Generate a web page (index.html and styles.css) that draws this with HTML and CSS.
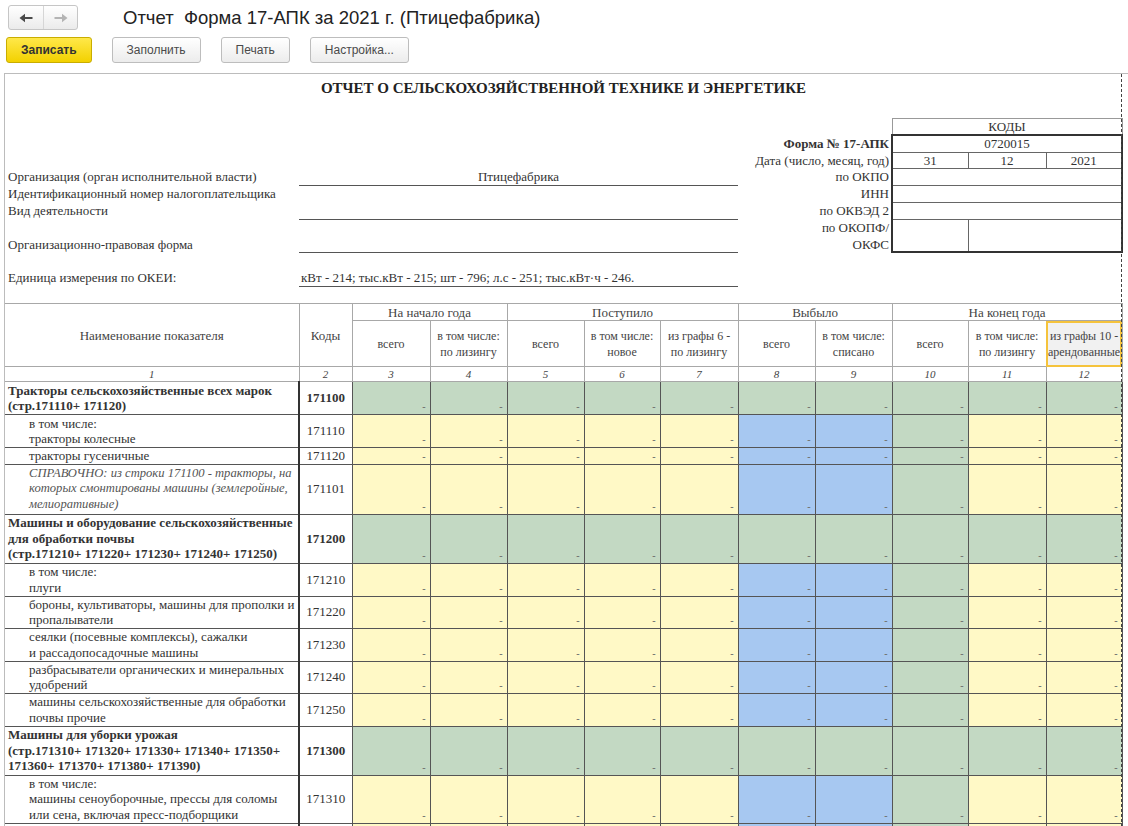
FILE: index.html
```html
<!DOCTYPE html>
<html lang="ru">
<head>
<meta charset="utf-8">
<title>Отчет Форма 17-АПК за 2021 г.</title>
<link rel="stylesheet" href="styles.css">
</head>
<body>
<div class="app">
  <header class="titlebar">
    <div class="nav">
      <button class="nav-btn" aria-label="Назад"><svg width="14" height="10" viewBox="0 0 14 10"><path d="M0.5 5 L6 0.8 L6 3.9 L13.5 3.9 L13.5 6.1 L6 6.1 L6 9.2 Z" fill="#4a4a4a"/></svg></button>
      <button class="nav-btn" aria-label="Вперед"><svg width="14" height="10" viewBox="0 0 14 10"><path d="M13.5 5 L8 0.8 L8 3.9 L0.5 3.9 L0.5 6.1 L8 6.1 L8 9.2 Z" fill="#b4b4b4"/></svg></button>
    </div>
    <h1 class="title">Отчет&nbsp; Форма 17-АПК за 2021 г. (Птицефабрика)</h1>
  </header>

  <div class="toolbar">
    <button class="btn btn-primary">Записать</button>
    <button class="btn">Заполнить</button>
    <button class="btn">Печать</button>
    <button class="btn">Настройка...</button>
  </div>

  <div class="sheet">
    <div class="doc">
      <div class="doc-title">ОТЧЕТ О СЕЛЬСКОХОЗЯЙСТВЕННОЙ ТЕХНИКЕ И ЭНЕРГЕТИКЕ</div>

      <table class="info">
        <colgroup>
          <col class="c1"><col class="c2"><col class="c3"><col class="c4"><col class="c5"><col class="c6"><col class="c7"><col class="c8"><col class="c9"><col class="c10"><col class="c11"><col class="c12">
        </colgroup>
        <tr class="ih16">
          <td colspan="9"></td>
          <td colspan="3" class="codes-head">КОДЫ</td>
        </tr>
        <tr class="ih17">
          <td colspan="7"></td>
          <td colspan="2" class="lbl b">Форма № 17-АПК</td>
          <td colspan="3" class="code-cell top">0720015</td>
        </tr>
        <tr class="ih16">
          <td colspan="7"></td>
          <td colspan="2" class="lbl">Дата (число, месяц, год)</td>
          <td class="code-cell l">31</td>
          <td class="code-cell mid">12</td>
          <td class="code-cell r">2021</td>
        </tr>
        <tr class="ih17">
          <td class="plain">Организация (орган исполнительной власти)</td>
          <td colspan="6" class="uline center">Птицефабрика</td>
          <td colspan="2" class="lbl">по ОКПО</td>
          <td colspan="3" class="code-cell"></td>
        </tr>
        <tr class="ih17">
          <td class="plain">Идентификационный номер налогоплательщика</td>
          <td colspan="6"></td>
          <td colspan="2" class="lbl">ИНН</td>
          <td colspan="3" class="code-cell"></td>
        </tr>
        <tr class="ih17">
          <td class="plain">Вид деятельности</td>
          <td colspan="6" class="uline"></td>
          <td colspan="2" class="lbl">по ОКВЭД 2</td>
          <td colspan="3" class="code-cell"></td>
        </tr>
        <tr class="ih17">
          <td></td>
          <td colspan="6"></td>
          <td colspan="2" class="lbl">по ОКОПФ/</td>
          <td rowspan="2" class="code-cell l bottom"></td>
          <td rowspan="2" colspan="2" class="code-cell r bottom"></td>
        </tr>
        <tr class="ih16">
          <td class="plain">Организационно-правовая форма</td>
          <td colspan="6" class="uline"></td>
          <td colspan="2" class="lbl">ОКФС</td>
        </tr>
        <tr class="ih17"><td colspan="12"></td></tr>
        <tr class="ih17">
          <td class="plain">Единица измерения по ОКЕИ:</td>
          <td colspan="6" class="uline">кВт - 214; тыс.кВт - 215; шт - 796; л.с - 251; тыс.кВт·ч - 246.</td>
          <td colspan="5"></td>
        </tr>
        <tr class="ih17"><td colspan="12"></td></tr>
      </table>

      <table class="grid">
        <colgroup>
          <col class="c1"><col class="c2"><col class="c3"><col class="c4"><col class="c5"><col class="c6"><col class="c7"><col class="c8"><col class="c9"><col class="c10"><col class="c11"><col class="c12">
        </colgroup>
        <thead>
          <tr class="hh1">
            <th rowspan="2" class="first big">Наименование показателя</th>
            <th rowspan="2" class="big">Коды</th>
            <th colspan="2" class="big">На начало года</th>
            <th colspan="3" class="big">Поступило</th>
            <th colspan="2" class="big">Выбыло</th>
            <th colspan="3" class="big">На конец года</th>
          </tr>
          <tr class="hh2">
            <th class="sub">всего</th>
            <th class="sub">в том числе:<br>по лизингу</th>
            <th class="sub">всего</th>
            <th class="sub">в том числе:<br>новое</th>
            <th class="sub">из графы 6 -<br>по лизингу</th>
            <th class="sub">всего</th>
            <th class="sub">в том числе:<br>списано</th>
            <th class="sub">всего</th>
            <th class="sub">в том числе:<br>по лизингу</th>
            <th class="sub selected">из графы 10 -<br>арендованные</th>
          </tr>
          <tr class="hh3">
            <th class="num first">1</th><th class="num">2</th><th class="num">3</th><th class="num">4</th><th class="num">5</th><th class="num">6</th><th class="num">7</th><th class="num">8</th><th class="num">9</th><th class="num">10</th><th class="num">11</th><th class="num">12</th>
          </tr>
        </thead>
        <tbody>
          <tr class="rh33">
            <td class="name b">Тракторы сельскохозяйственные всех марок<br>(стр.171110+ 171120)</td>
            <td class="code b">171100</td>
            <td class="v g">-</td><td class="v g">-</td><td class="v g">-</td><td class="v g">-</td><td class="v g">-</td><td class="v g">-</td><td class="v g">-</td><td class="v g">-</td><td class="v g">-</td><td class="v g">-</td>
          </tr>
          <tr class="rh33">
            <td class="name ind">в том числе:<br>тракторы колесные</td>
            <td class="code">171110</td>
            <td class="v y">-</td><td class="v y">-</td><td class="v y">-</td><td class="v y">-</td><td class="v y">-</td><td class="v bl">-</td><td class="v bl">-</td><td class="v g">-</td><td class="v y">-</td><td class="v y">-</td>
          </tr>
          <tr class="rh16">
            <td class="name ind">тракторы гусеничные</td>
            <td class="code">171120</td>
            <td class="v y">-</td><td class="v y">-</td><td class="v y">-</td><td class="v y">-</td><td class="v y">-</td><td class="v bl">-</td><td class="v bl">-</td><td class="v g">-</td><td class="v y">-</td><td class="v y">-</td>
          </tr>
          <tr class="rh50">
            <td class="name ind it">СПРАВОЧНО: из строки 171100 - тракторы, на<br>которых смонтированы машины (землеройные,<br>мелиоративные)</td>
            <td class="code">171101</td>
            <td class="v y">-</td><td class="v y">-</td><td class="v y">-</td><td class="v y">-</td><td class="v y">-</td><td class="v bl">-</td><td class="v bl">-</td><td class="v g">-</td><td class="v y">-</td><td class="v y">-</td>
          </tr>
          <tr class="rh49">
            <td class="name b">Машины и оборудование сельскохозяйственные<br>для обработки почвы<br>(стр.171210+ 171220+ 171230+ 171240+ 171250)</td>
            <td class="code b">171200</td>
            <td class="v g">-</td><td class="v g">-</td><td class="v g">-</td><td class="v g">-</td><td class="v g">-</td><td class="v g">-</td><td class="v g">-</td><td class="v g">-</td><td class="v g">-</td><td class="v g">-</td>
          </tr>
          <tr class="rh33">
            <td class="name ind">в том числе:<br>плуги</td>
            <td class="code">171210</td>
            <td class="v y">-</td><td class="v y">-</td><td class="v y">-</td><td class="v y">-</td><td class="v y">-</td><td class="v bl">-</td><td class="v bl">-</td><td class="v g">-</td><td class="v y">-</td><td class="v y">-</td>
          </tr>
          <tr class="rh32">
            <td class="name ind">бороны, культиваторы, машины для прополки и<br>пропалыватели</td>
            <td class="code">171220</td>
            <td class="v y">-</td><td class="v y">-</td><td class="v y">-</td><td class="v y">-</td><td class="v y">-</td><td class="v bl">-</td><td class="v bl">-</td><td class="v g">-</td><td class="v y">-</td><td class="v y">-</td>
          </tr>
          <tr class="rh33">
            <td class="name ind">сеялки (посевные комплексы), сажалки<br>и рассадопосадочные машины</td>
            <td class="code">171230</td>
            <td class="v y">-</td><td class="v y">-</td><td class="v y">-</td><td class="v y">-</td><td class="v y">-</td><td class="v bl">-</td><td class="v bl">-</td><td class="v g">-</td><td class="v y">-</td><td class="v y">-</td>
          </tr>
          <tr class="rh32">
            <td class="name ind">разбрасыватели органических и минеральных<br>удобрений</td>
            <td class="code">171240</td>
            <td class="v y">-</td><td class="v y">-</td><td class="v y">-</td><td class="v y">-</td><td class="v y">-</td><td class="v bl">-</td><td class="v bl">-</td><td class="v g">-</td><td class="v y">-</td><td class="v y">-</td>
          </tr>
          <tr class="rh33">
            <td class="name ind">машины сельскохозяйственные для обработки<br>почвы прочие</td>
            <td class="code">171250</td>
            <td class="v y">-</td><td class="v y">-</td><td class="v y">-</td><td class="v y">-</td><td class="v y">-</td><td class="v bl">-</td><td class="v bl">-</td><td class="v g">-</td><td class="v y">-</td><td class="v y">-</td>
          </tr>
          <tr class="rh49">
            <td class="name b">Машины для уборки урожая<br>(стр.171310+ 171320+ 171330+ 171340+ 171350+<br>171360+ 171370+ 171380+ 171390)</td>
            <td class="code b">171300</td>
            <td class="v g">-</td><td class="v g">-</td><td class="v g">-</td><td class="v g">-</td><td class="v g">-</td><td class="v g">-</td><td class="v g">-</td><td class="v g">-</td><td class="v g">-</td><td class="v g">-</td>
          </tr>
          <tr class="rh48">
            <td class="name ind">в том числе:<br>машины сеноуборочные, прессы для соломы<br>или сена, включая пресс-подборщики</td>
            <td class="code">171310</td>
            <td class="v y">-</td><td class="v y">-</td><td class="v y">-</td><td class="v y">-</td><td class="v y">-</td><td class="v bl">-</td><td class="v bl">-</td><td class="v g">-</td><td class="v y">-</td><td class="v y">-</td>
          </tr>
          <tr class="rh33">
            <td class="name"></td>
            <td class="code"></td>
            <td class="y"></td><td class="y"></td><td class="y"></td><td class="y"></td><td class="y"></td><td class="bl"></td><td class="bl"></td><td class="g"></td><td class="y"></td><td class="y"></td>
          </tr>
        </tbody>
      </table>
    </div>
  </div>
</div>
</body>
</html>
```

FILE: styles.css
```css
* { box-sizing: border-box; }

html, body {
  margin: 0;
  height: 100%;
}

body {
  background: #fff;
  font-family: "Liberation Sans", Arial, sans-serif;
  color: #333;
  overflow: hidden;
}

.app {
  height: 826px;
  display: flex;
  flex-direction: column;
}

/* ---------- title bar ---------- */
.titlebar {
  display: flex;
  align-items: center;
  padding: 5px 0 0 8px;
  height: 30px;
}

.nav {
  display: flex;
  height: 25px;
  border: 1px solid #c6c6c6;
  border-radius: 3px;
  background: linear-gradient(#ffffff, #ebebeb);
}

.nav-btn {
  width: 34px;
  height: 23px;
  padding: 0;
  border: 0;
  background: transparent;
  display: flex;
  align-items: center;
  justify-content: center;
}

.nav-btn + .nav-btn {
  border-left: 1px solid #d6d6d6;
}

.title {
  margin: 0 0 0 45px;
  font-size: 18.5px;
  font-weight: normal;
  color: #222;
  white-space: pre;
}

/* ---------- toolbar ---------- */
.toolbar {
  display: flex;
  gap: 20px;
  padding-left: 6px;
  margin-top: 7px;
  height: 26px;
}

.btn {
  height: 26px;
  padding: 0 14px;
  border: 1px solid #bdbdbd;
  border-radius: 3px;
  background: linear-gradient(#ffffff, #ececec);
  font: 12px "Liberation Sans", Arial, sans-serif;
  color: #4a4a4a;
}

.btn-primary {
  background: linear-gradient(#ffe84a, #f3d100);
  border-color: #c9ad00;
  font-weight: bold;
  color: #333;
}

/* ---------- sheet ---------- */
.sheet {
  flex: 1;
  margin: 10px 0 0 4px;
  border-top: 1px solid #bcbcbc;
  border-left: 1px solid #bcbcbc;
  overflow: hidden;
}

.doc {
  position: relative;
  width: 1117px;
  font-family: "Liberation Serif", "Times New Roman", serif;
  font-size: 13px;
  color: #333;
}

.doc::after {
  content: "";
  position: absolute;
  top: 0;
  bottom: 0;
  left: 1116px;
  border-left: 1px dashed #444;
}

.doc-title {
  height: 44px;
  padding-top: 5px;
  text-align: center;
  font-weight: bold;
  font-size: 15px;
  line-height: 19px;
  color: #222;
}

table {
  border-collapse: collapse;
  table-layout: fixed;
  width: 1117px;
}

.c1 { width: 294px; }
.c2 { width: 53px; }
.c3 { width: 78px; }
.c4 { width: 77px; }
.c5 { width: 77px; }
.c6 { width: 76px; }
.c7 { width: 78px; }
.c8 { width: 77px; }
.c9 { width: 77px; }
.c10 { width: 76px; }
.c11 { width: 78px; }
.c12 { width: 76px; }

/* ---------- info block ---------- */
.info td {
  padding: 0 2px;
  line-height: 15px;
  white-space: nowrap;
  overflow: visible;
}

.ih16 { height: 16px; }
.ih17 { height: 17px; }

.info .plain { padding-left: 3px; }

.info .lbl {
  text-align: right;
  padding-right: 2px;
}

.b { font-weight: bold; }
.center { text-align: center; }

.uline {
  border-bottom: 1px solid #555;
}

.codes-head {
  text-align: center;
  border: 1px solid #999;
}

.code-cell {
  text-align: center;
  border: 1px solid #666;
  border-left: 2px solid #333;
  border-right: 2px solid #333;
}

.code-cell.l { border-right: 1px solid #666; }
.code-cell.r { border-left: 1px solid #666; }
.code-cell.mid { border-left: 1px solid #666; border-right: 1px solid #666; }
.code-cell.top { border-top: 2px solid #333; }
.code-cell.bottom { border-bottom: 2px solid #333; }

/* ---------- grid ---------- */
.grid th {
  font-weight: normal;
  font-size: 12px;
  line-height: 16px;
  color: #444;
  text-align: center;
  vertical-align: middle;
  border: 1px solid #a8a8a8;
  padding: 0;
}

.grid th.big { font-size: 13px; line-height: 15px; }
.grid th.first { border-left: 0; }

.hh1 { height: 17px; }
.hh2 { height: 46px; }
.hh3 { height: 15px; }

.grid th.num {
  font-style: italic;
  font-size: 11px;
  line-height: 13px;
}

.grid th.selected {
  background: #f1f1f1;
  outline: 2px solid #f5c33c;
  outline-offset: -2px;
}

.grid td {
  border: 1px solid #555;
  padding: 0;
  line-height: 15.5px;
  white-space: nowrap;
}

.rh16 { height: 16px; }
.rh32 { height: 32px; }
.rh33 { height: 33px; }
.rh48 { height: 48px; }
.rh49 { height: 49px; }
.rh50 { height: 50px; }

.grid td.name {
  border-left: 0;
  padding-left: 3px;
  background: #fff;
}

.grid td.name.ind { padding-left: 24px; }
.grid td.name.it { font-style: italic; color: #555; font-size: 12.6px; }

.grid td.code {
  text-align: center;
  border-left: 2px solid #333;
  background: #fff;
}

.grid td.v {
  text-align: right;
  vertical-align: bottom;
  font-size: 10px;
  font-weight: bold;
  line-height: 12px;
  color: #707070;
  padding: 0 4px 1px 0;
}

.g { background: #c3d9c3; }
.y { background: #fff9c6; }
.bl { background: #a7c8f1; }
```
